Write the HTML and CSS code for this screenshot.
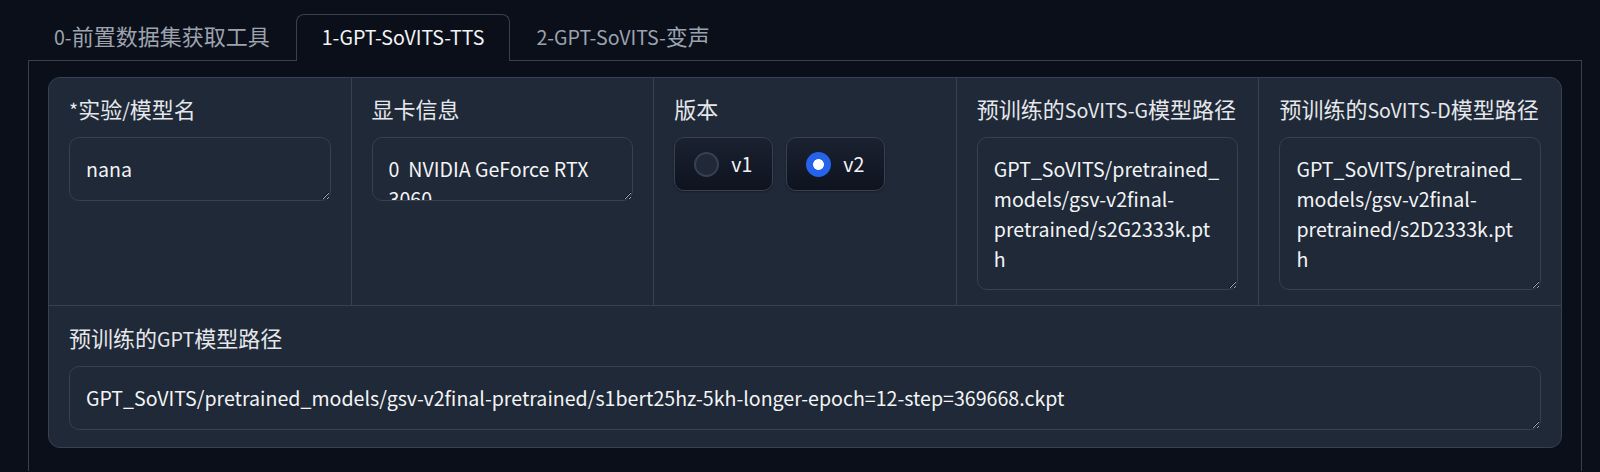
FILE: index.html
```html
<!DOCTYPE html>
<html lang="zh">
<head>
  <meta charset="UTF-8" />
  <meta name="viewport" content="width=device-width, initial-scale=1.0" />
  <title>GPT-SoVITS WebUI</title>
  <link rel="stylesheet" href="styles.css">
</head>
<body>
  <div class="tabs">
    <div class="tab-nav">
      <button class="tab">0-<span class="zh">前置数据集获取工具</span></button>
      <button class="tab selected">1-GPT-SoVITS-TTS</button>
      <button class="tab">2-GPT-SoVITS-<span class="zh">变声</span></button>
    </div>

    <div class="tab-panel">
      <div class="group">
        <div class="row cols-5">
          <div class="block">
            <label class="label" for="expName">*<span class="zh">实验</span>/<span class="zh">模型名</span></label>
            <textarea id="expName" class="input short" spellcheck="false">nana</textarea>
          </div>
          <div class="block">
            <label class="label" for="gpuInfo"><span class="zh">显卡信息</span></label>
            <textarea id="gpuInfo" class="input short" spellcheck="false">0  NVIDIA GeForce RTX 3060</textarea>
          </div>
          <div class="block">
            <span class="label"><span class="zh">版本</span></span>
            <div class="radio-group">
              <label class="radio"><input type="radio" name="version" value="v1">v1</label>
              <label class="radio"><input type="radio" name="version" value="v2" checked>v2</label>
            </div>
          </div>
          <div class="block">
            <label class="label" for="pretrainedG"><span class="zh">预训练的</span>SoVITS-G<span class="zh">模型路径</span></label>
            <textarea id="pretrainedG" class="input tall" spellcheck="false">GPT_SoVITS/pretrained_models/gsv-v2final-pretrained/s2G2333k.pth</textarea>
          </div>
          <div class="block">
            <label class="label" for="pretrainedD"><span class="zh">预训练的</span>SoVITS-D<span class="zh">模型路径</span></label>
            <textarea id="pretrainedD" class="input tall" spellcheck="false">GPT_SoVITS/pretrained_models/gsv-v2final-pretrained/s2D2333k.pth</textarea>
          </div>
        </div>

        <div class="row">
          <div class="block wide">
            <label class="label" for="pretrainedGpt"><span class="zh">预训练的</span>GPT<span class="zh">模型路径</span></label>
            <textarea id="pretrainedGpt" class="input short" spellcheck="false">GPT_SoVITS/pretrained_models/gsv-v2final-pretrained/s1bert25hz-5kh-longer-epoch=12-step=369668.ckpt</textarea>
          </div>
        </div>
      </div>
    </div>
  </div>
</body>
</html>
```

FILE: styles.css
```css
:root { color-scheme: dark; }
body { margin: 0; padding: 0; background: #0b0f19; color: #f3f4f6; font-family: "Noto Sans CJK SC", "Noto Sans", sans-serif; font-size: 19.6px; line-height: 30px; }

/* CJK glyphs in the original render a bit larger than the latin ones */
.zh { font-size: 22px; line-height: 1; }

.tabs { margin: 0 18px 0 28px; }
.tab-nav { display: flex; align-items: flex-end; padding-top: 14px; border-bottom: 1px solid #374151; }
.tab { font: inherit; color: #9ca3af; background: none; border: 1px solid transparent; border-bottom: none; border-radius: 8px 8px 0 0; padding: 7px 25px 9px; margin: 0 0 -1px; cursor: pointer; }
.tab.selected { color: #f3f4f6; background: #0b0f19; border-color: #374151; }

.tab-panel { border: 1px solid #374151; border-top: none; border-bottom: none; padding: 16px 19px 23px; }

.group { display: flex; flex-direction: column; gap: 1px; background: #374151; border: 1px solid #374151; border-radius: 12px; overflow: hidden; }
.row { display: grid; grid-template-columns: 1fr; gap: 1px; }
.row.cols-5 { grid-template-columns: repeat(5, 1fr); }
.block { background: #1f2937; padding: 17px 20px 15px; min-width: 0; }
.block.wide { padding: 18px 20px 17px; }

.label { display: block; margin-bottom: 12px; color: #e5e7eb; }

.input { display: block; box-sizing: border-box; width: 100%; margin: 0; font: inherit; color: #f3f4f6; background: #1f2937; border: 1px solid #374151; border-radius: 10px; padding: 16px 17px 16px 16px; resize: vertical; overflow: hidden; outline: none; }
.input.short { height: 64px; }
.input.tall { height: 153px; }

.radio-group { display: flex; gap: 13px; }
.radio { display: inline-flex; align-items: center; gap: 12px; height: 54px; box-sizing: border-box; padding: 0 20px 0 19px; border: 1px solid #374151; border-radius: 10px; background: linear-gradient(to top, #0e131f, #1a2130); box-shadow: 0 1px 2px rgba(0,0,0,0.3); cursor: pointer; }
.radio input { appearance: none; margin: 0; width: 25px; height: 25px; box-sizing: border-box; border-radius: 50%; border: 2px solid #374151; background: #1f2937; }
.radio input:checked { border-color: #2563eb; background: radial-gradient(circle, #fff 5px, #2563eb 5.8px); }
```
